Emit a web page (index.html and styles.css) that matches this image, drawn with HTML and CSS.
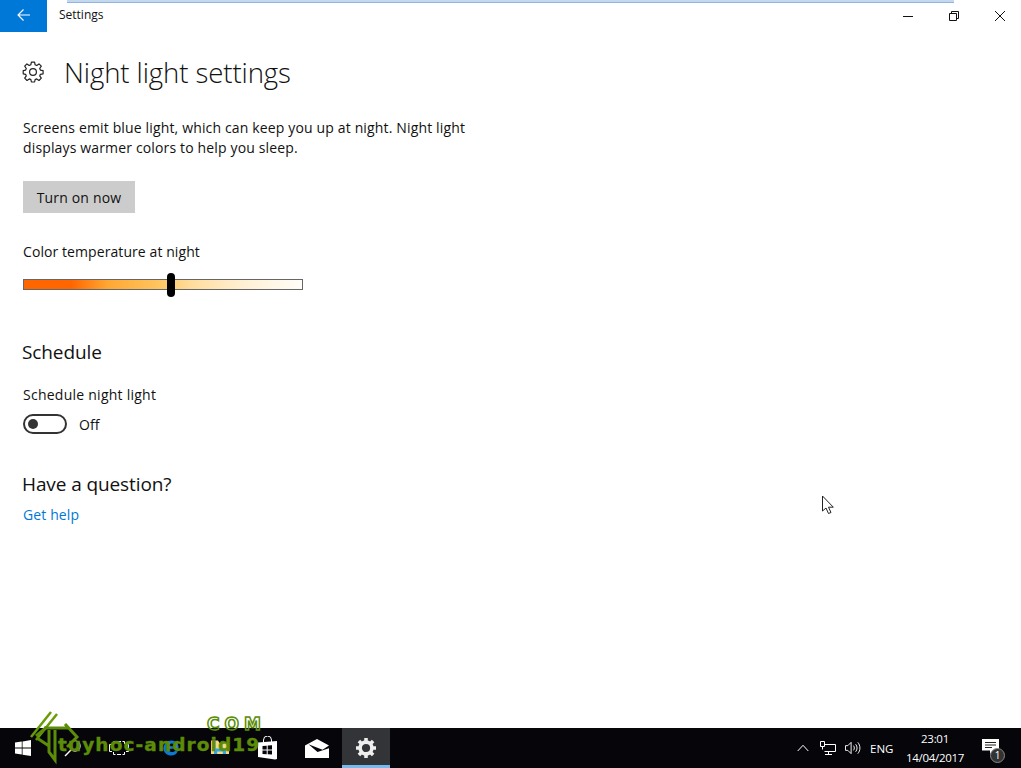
FILE: index.html
```html
<!DOCTYPE html>
<html lang="en">
<head>
<meta charset="utf-8">
<title>Settings</title>
<link rel="stylesheet" href="styles.css">
</head>
<body>
<div class="screen">
  <div class="window">
    <div class="strip"></div>
    <header class="titlebar">
      <button class="back" aria-label="Back">
        <svg width="16" height="16" viewBox="0 0 16 16"><path d="M14 8H2.500M7.500 2.500L2 8l5.500 5.500" fill="none" stroke="#fff" stroke-width="1.100"/></svg>
      </button>
      <span class="apptitle">Settings</span>
      <div class="winctrls">
        <span class="winbtn"><svg width="12" height="12" viewBox="0 0 12 12"><path d="M1 6.500h10" stroke="#111" stroke-width="1"/></svg></span>
        <span class="winbtn"><svg width="12" height="12" viewBox="0 0 12 12"><path d="M1.500 3.500h7v7h-7zM3.500 3.500v-2h7v7h-2" fill="none" stroke="#111" stroke-width="1"/></svg></span>
        <span class="winbtn"><svg width="12" height="12" viewBox="0 0 12 12"><path d="M1 1l10 10M11 1L1 11" stroke="#111" stroke-width="1"/></svg></span>
      </div>
    </header>
    <main class="content">
      <div class="heading">
        <svg class="gear" width="22" height="22" viewBox="0 0 22 22"><path d="M9.400 1.500h3.200l.5 2.700 1.600.7 2.300-1.600 2.300 2.300-1.600 2.300.7 1.600 2.700.5v3.200l-2.700.5-.7 1.600 1.600 2.300-2.300 2.300-2.300-1.600-1.600.7-.5 2.400H9.400l-.5-2.400-1.600-.7-2.300 1.600-2.300-2.300 1.600-2.300-.7-1.600-2.400-.5v-3.200l2.400-.5.7-1.600-1.600-2.300L4.900 3.300l2.300 1.600 1.600-.7z" transform="translate(0 -.4)" fill="none" stroke="#222" stroke-width="1.200" stroke-linejoin="round"/><circle cx="11" cy="11" r="3.400" fill="none" stroke="#222" stroke-width="1.200"/></svg>
        <h1>Night light settings</h1>
      </div>
      <p class="intro">Screens emit blue light, which can keep you up at night. Night light displays warmer colors to help you sleep.</p>
      <button class="primary">Turn on now</button>
      <div class="label temp-label">Color temperature at night</div>
      <div class="slider"><span class="thumb"></span></div>
      <h2 class="schedule">Schedule</h2>
      <div class="label sched-label">Schedule night light</div>
      <div class="toggle-row">
        <span class="toggle"><span class="knob"></span></span>
        <span class="label">Off</span>
      </div>
      <h2 class="question">Have a question?</h2>
      <a class="help" href="#">Get help</a>
    </main>
  </div>
  <footer class="taskbar">
    <span class="tb-item tb-start"><svg width="16" height="16" viewBox="0 0 17 17"><path d="M0 2.600l7.200-1v6.500H0zM8 1.500L17 0v8.100H8zM0 8.900h7.200v6.500l-7.200-1zM8 8.900h9V17l-9-1.400z" fill="#fff"/></svg></span>
    <span class="tb-item"><svg width="18" height="18" viewBox="0 0 18 18"><circle cx="11" cy="7" r="5.200" fill="none" stroke="#ddd" stroke-width="1.100"/><path d="M7.200 10.800L1 17" stroke="#fff" stroke-width="1.400"/></svg></span>
    <span class="tb-item tb-view"><svg width="20" height="14" viewBox="0 0 20 14"><path d="M4.500 3V.5h2M13.500 .5h2V3M15.500 11v2.500h-2M6.500 13.500h-2V11M3 3.500H.5v7H3M17 3.500h2.500v7H17M8 .5h4M8 13.500h4" fill="none" stroke="#fff" stroke-width="1"/></svg></span>
    <span class="tb-item"><svg width="18" height="18" viewBox="0 0 18 18"><path d="M15.800 12.600c-1.400 2.700-3.400 3.900-6.300 3.900C5 16.500 1.500 13.500 1.500 9.400 1.500 5.300 4.700 1.500 9.600 1.500c4.300 0 7 3 7 6.800v1.500H6.300c.2 2 1.700 3.300 3.700 3.300 1.300 0 2.500-.5 3.300-1.500zM6.400 7.300h6.200c-.1-1.800-1.300-2.900-3-2.900-1.600 0-2.900 1.100-3.200 2.900z" fill="#0f78d0"/></svg></span>
    <span class="tb-item"><svg width="20" height="18" viewBox="0 0 20 18"><path d="M1 4h18v11H1z" fill="#f5d98a"/><path d="M1 1.500h7l1.500 2.500H1z" fill="#f5d98a"/><path d="M4 15V9.500h12V15h-3.200v-2.500H7.200V15z" fill="#33a6e8"/></svg></span>
    <span class="tb-item tb-store"><svg width="21" height="24" viewBox="0 0 21 24"><path d="M1 6.500L20 5v18l-2 .5L1 21z" fill="#fff"/><path d="M6.500 6V4a4 4 0 0 1 8 0v2" fill="none" stroke="#fff" stroke-width="1"/><path d="M5.500 10l4.200-.3v3.800H5.500zM10.700 9.600l4.300-.3v4.200h-4.300zM5.500 14.500h4.200v3.700l-4.200-.3zM10.700 14.500H15v4l-4.300-.3z" fill="#05050a"/></svg></span>
    <span class="tb-item tb-mail"><svg width="24" height="19" viewBox="0 0 24 19"><path d="M0 6.500L12 0l12 6.500-6.500 4.300L3.500 5.300l9 7.700L24 9.200V19H0z" fill="#fff"/></svg></span>
    <span class="tb-item tb-active"><svg width="20" height="20" viewBox="0 0 18 18"><path d="M9 3.700a5.300 5.300 0 1 0 0 10.600A5.300 5.300 0 0 0 9 3.700z" fill="none" stroke="#eee" stroke-width="3.200"/><path d="M9 0v3.500M9 14.500V18M0 9h3.500M14.500 9H18M2.600 2.600l2.500 2.500M12.900 12.900l2.500 2.500M15.400 2.600l-2.500 2.500M5.100 12.900l-2.500 2.500" stroke="#eee" stroke-width="3.200"/></svg></span>
    <div class="tray">
      <svg class="tray-chevron" width="12" height="8" viewBox="0 0 12 8"><path d="M.7 7L6 1.300 11.300 7" fill="none" stroke="#fff" stroke-width="1"/></svg>
      <svg class="tray-net" width="16" height="15" viewBox="0 0 16 15"><path d="M4.500 3.500H15.500V10.500H4.500M8.500 10.500v3M5 13.500h7M.5 .5h4v5h-4zM2.500 5.500v3" fill="none" stroke="#fff" stroke-width="1"/></svg>
      <svg class="tray-vol" width="16" height="14" viewBox="0 0 17 14"><path d="M.5 4.500H3L6.500 1v12L3 9.500H.5zM9 4.500c1.200 1.500 1.200 3.500 0 5M11.300 3c2 2.300 2 5.700 0 8M13.600 1c3 3.500 3 8.500 0 12" fill="none" stroke="#fff" stroke-width="1"/></svg>
      <span class="tray-lang">ENG</span>
      <div class="clock"><span>23:01</span><span>14/04/2017</span></div>
      <div class="notif">
        <svg width="17" height="15" viewBox="0 0 17 15"><path d="M0 0h17v11.500h-5.500L8 15v-3.500H0z" fill="#fff"/><path d="M3 3.500h11M3 6h11M3 8.500h7" stroke="#222" stroke-width="1"/></svg>
        <span class="badge">1</span>
      </div>
    </div>
  </footer>
  <div class="watermark"><span class="wm-com">COM</span><span class="wm-text">tuyhoc-android19</span>
    <svg class="wm-logo" width="50" height="58" viewBox="0 0 50 58"><path d="M1 27L21 2M6 30L27 4" fill="none" stroke="#6a9c08" stroke-width="2.500"/><path d="M14 18H38M35 14L47 27 37 37M6 26L17 17M19 20V42L25 50V20M7 28L19 36" fill="none" stroke="#5c8c08" stroke-width="3"/></svg>
  </div>
  <svg class="cursor" width="14" height="20" viewBox="0 0 14 20"><path d="M1.500 1v15l3.500-3 2.500 5.500 2.500-1-2.500-5.300h4.800z" fill="#fff" stroke="#222" stroke-width="1"/></svg>
</div>
</body>
</html>
```
FILE: styles.css
```css
* { box-sizing: border-box; }
html, body { margin: 0; height: 100%; background: #fff; overflow: hidden; }
body { font-family: "Open Sans", "Noto Sans", "Liberation Sans", sans-serif; color: #111; }
.screen { position: relative; width: 1021px; height: 768px; display: flex; flex-direction: column; overflow: hidden; }
.window { flex: 1; display: flex; flex-direction: column; min-height: 0; }
.strip { position: absolute; left: 67px; top: 0; width: 887px; height: 3px; background: #c4d9f0; border-bottom: 1px solid #8fb4e0; }
.titlebar { height: 32px; display: flex; align-items: center; }
.back { width: 47px; height: 32px; background: #0078d7; border: 0; padding: 0 0 2px; display: flex; align-items: center; justify-content: center; }
.apptitle { margin-left: 12px; font-size: 12px; line-height: 32px; position: relative; top: -1px; color: #111; }
.winctrls { margin-left: auto; margin-right: -2px; display: flex; }
.winbtn { width: 46px; height: 32px; display: flex; align-items: center; justify-content: center; }
.content { flex: 1; padding: 0 0 0 23px; display: flex; flex-direction: column; align-items: flex-start; }
.heading { display: flex; align-items: center; margin: 21px 0 0 -1px; height: 38px; }
.gear { flex: none; }
h1 { margin: 0 0 0 20px; font-weight: 300; font-size: 27.600px; line-height: 38px; color: #111; letter-spacing: -0.1px; }
.intro { margin: 27px 0 0; width: 470px; font-size: 14px; line-height: 20px; letter-spacing: 0.15px; font-weight: 400; }
.primary { margin-top: 23px; width: 112px; height: 32px; background: #ccc; border: 0; padding: 0; font: inherit; font-size: 14px; letter-spacing: 0.17px; color: #111; }
.label { font-size: 14px; line-height: 20px; letter-spacing: 0.08px; }
.temp-label { margin-top: 29px; }
.slider { position: relative; margin-top: 17px; width: 280px; height: 11px; border: 1px solid #666; background: linear-gradient(90deg, #ff6600 0, #ff6600 17%, #ffa733 30%, #ffc45e 48%, #ffdc9c 60%, #fff0d2 78%, #fffdf8 100%); }
.thumb { position: absolute; left: 143px; top: -7px; width: 8px; height: 24px; border-radius: 4px; background: #000; }
h2 { margin: 0; font-weight: 400; color: #111; }
.schedule { margin-top: 49px; margin-left: -1px; font-size: 19px; line-height: 26px; letter-spacing: -0.1px; }
.sched-label { margin-top: 20px; letter-spacing: 0.25px; }
.toggle-row { display: flex; align-items: center; margin-top: 8px; height: 22px; }
.toggle { width: 44px; height: 20px; border: 2px solid #333; border-radius: 10px; display: flex; align-items: center; padding-left: 3px; }
.knob { width: 10px; height: 10px; border-radius: 50%; background: #333; }
.toggle-row .label { margin-left: 12px; padding-top: 1px; }
.question { margin-top: 36px; margin-left: -1px; font-size: 19px; line-height: 26px; letter-spacing: -0.1px; }
.help { margin-top: 8px; font-size: 14px; line-height: 20px; letter-spacing: 0.12px; color: #0078d7; text-decoration: none; }
.taskbar { height: 40px; flex: none; background: #05050a; display: flex; align-items: center; }
.tb-item { width: 48.860px; height: 40px; flex: none; display: flex; align-items: center; justify-content: center; }
.tb-start { padding-right: 3px; }
.tb-view { padding-right: 6px; }
.tb-store, .tb-mail { padding-right: 2px; }
.tb-active { background: #333438; border-bottom: 3px solid #76b9ed; padding-top: 2px; width: 48px; }
.tray { margin-left: auto; display: flex; align-items: center; height: 40px; color: #fff; }
.tray-chevron { margin-right: 11px; }
.tray-net { margin-right: 9px; }
.tray-vol { margin-right: 9px; }
.tray-lang { font-size: 11.500px; width: 31px; }
.clock { width: 68px; display: flex; flex-direction: column; align-items: center; font-size: 11.500px; line-height: 19px; letter-spacing: -0.3px; margin-right: 4px; }
.notif { position: relative; width: 48px; height: 40px; display: flex; align-items: center; padding-left: 9px; padding-bottom: 3px; }
.badge { position: absolute; left: 17px; top: 20px; width: 15px; height: 15px; border-radius: 50%; background: #333; border: 1px solid #888; color: #fff; font-size: 10px; line-height: 13px; text-align: center; }
.watermark { position: absolute; left: 0; top: 0; width: 0; height: 0; font-family: "DejaVu Sans", sans-serif; font-weight: 700; color: #5c8c08; }
.wm-text { position: absolute; left: 58px; top: 737px; font-size: 18.500px; line-height: 16px; white-space: nowrap; letter-spacing: 1.100px; -webkit-text-stroke: 0.400px #5c8c08; }
.wm-com { position: absolute; left: 207px; top: 717px; font-size: 17px; line-height: 14px; letter-spacing: 5px; color: transparent; -webkit-text-stroke: 1.500px #5c8c08; }
.wm-logo { position: absolute; left: 30px; top: 710px; }
.cursor { position: absolute; left: 821px; top: 495px; }
```
